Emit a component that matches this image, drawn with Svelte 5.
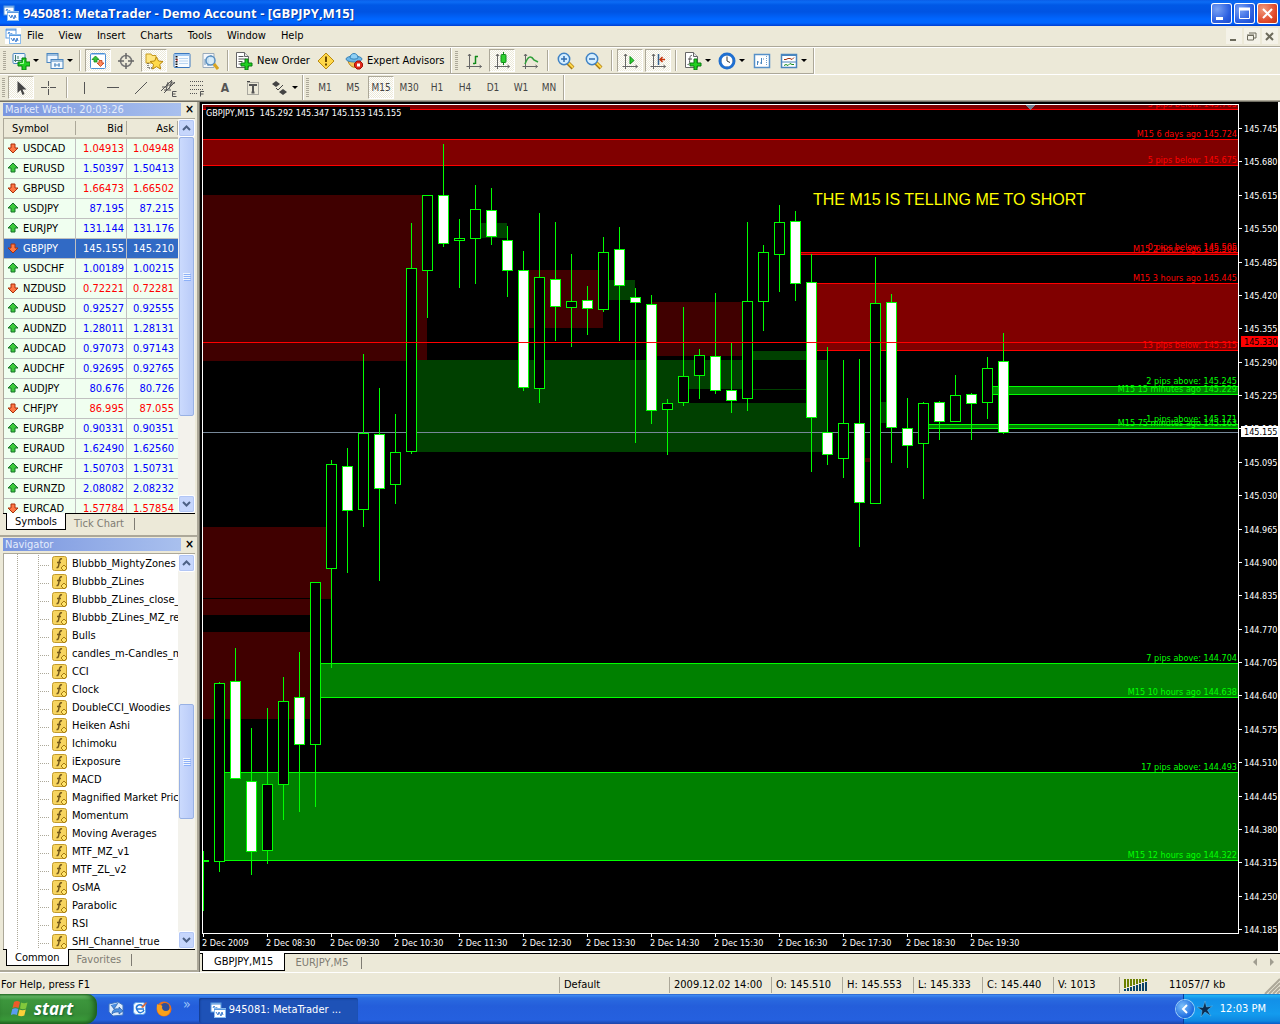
<script>
  const menus = ["File", "View", "Insert", "Charts", "Tools", "Window", "Help"];

  const quotes = [
    ["USDCAD", "1.04913", "1.04948", "down"],
    ["EURUSD", "1.50397", "1.50413", "up"],
    ["GBPUSD", "1.66473", "1.66502", "down"],
    ["USDJPY", "87.195", "87.215", "up"],
    ["EURJPY", "131.144", "131.176", "up"],
    ["GBPJPY", "145.155", "145.210", "down"],
    ["USDCHF", "1.00189", "1.00215", "up"],
    ["NZDUSD", "0.72221", "0.72281", "down"],
    ["AUDUSD", "0.92527", "0.92555", "up"],
    ["AUDNZD", "1.28011", "1.28131", "up"],
    ["AUDCAD", "0.97073", "0.97143", "up"],
    ["AUDCHF", "0.92695", "0.92765", "up"],
    ["AUDJPY", "80.676", "80.726", "up"],
    ["CHFJPY", "86.995", "87.055", "down"],
    ["EURGBP", "0.90331", "0.90351", "up"],
    ["EURAUD", "1.62490", "1.62560", "up"],
    ["EURCHF", "1.50703", "1.50731", "up"],
    ["EURNZD", "2.08082", "2.08232", "up"],
    ["EURCAD", "1.57784", "1.57854", "down"],
  ];
  let selected = "GBPJPY";

  const indicators = [
    "Blubbb_MightyZones", "Blubbb_ZLines", "Blubbb_ZLines_close_", "Blubbb_ZLines_MZ_re", "Bulls",
    "candles_m-Candles_m", "CCI", "Clock", "DoubleCCI_Woodies", "Heiken Ashi", "Ichimoku", "iExposure",
    "MACD", "Magnified Market Price", "Momentum", "Moving Averages", "MTF_MZ_v1", "MTF_ZL_v2", "OsMA",
    "Parabolic", "RSI", "SHI_Channel_true",
  ];

  const drawTools = ["vline", "hline", "trend", "channel", "fibo", "letter", "label"];
  const periods = ["M1", "M5", "M15", "M30", "H1", "H4", "D1", "W1", "MN"];
  let period = "M15";

  // plot scale: pixels below the top edge of the plot
  const step = 16;

  // high, body top, body bottom, low, 1 = bearish (filled)
  const candles = [
    [746, 755, 757, 806, 0], [577, 578, 757, 767, 0], [543, 576, 674, 674, 1], [623, 676, 747, 770, 1],
    [603, 679, 746, 759, 0], [572, 596, 680, 715, 0], [547, 592, 640, 707, 1], [477, 477, 640, 702, 0],
    [355, 359, 464, 563, 0], [343, 361, 406, 468, 1], [249, 328, 405, 422, 0], [283, 329, 384, 476, 1],
    [309, 347, 380, 399, 0], [118, 163, 347, 349, 0], [90, 90, 166, 213, 0], [39, 90, 139, 142, 1],
    [114, 133, 136, 183, 0], [80, 104, 134, 179, 0], [83, 105, 132, 140, 1], [121, 135, 166, 192, 1],
    [146, 165, 283, 286, 1], [108, 172, 284, 298, 0], [117, 174, 202, 236, 1], [149, 196, 203, 242, 0],
    [181, 195, 204, 230, 1], [132, 147, 205, 207, 0], [122, 144, 181, 236, 1], [183, 192, 198, 338, 1],
    [190, 199, 306, 319, 1], [294, 298, 305, 350, 0], [202, 271, 298, 301, 0], [244, 250, 271, 294, 0],
    [188, 251, 286, 289, 1], [238, 285, 296, 308, 1], [117, 196, 294, 306, 0], [140, 147, 197, 226, 0],
    [100, 117, 150, 187, 0], [106, 116, 179, 196, 1], [149, 177, 313, 367, 1], [242, 327, 350, 360, 1],
    [255, 318, 354, 373, 0], [254, 318, 398, 442, 1], [152, 198, 399, 399, 0], [189, 197, 323, 358, 1],
    [293, 323, 341, 363, 1], [297, 298, 339, 394, 0], [296, 297, 317, 335, 1], [270, 290, 317, 317, 0],
    [288, 289, 299, 335, 1], [252, 263, 298, 314, 0], [228, 256, 328, 329, 1],
  ];

  // tested zones: x, y, width, height, colour
  const oldZones = [
    [0, 90, 224, 166, "red"], [208, 255, 272, 29, "green"], [208, 284, 272, 14, "green"],
    [208, 298, 416, 49, "green"], [480, 255, 64, 29, "green"], [544, 246, 64, 9, "green"],
    [544, 284, 64, 1, "green"], [608, 255, 16, 43, "green"], [272, 118, 32, 15, "green"],
    [320, 165, 80, 58, "red"], [400, 175, 32, 20, "green"], [448, 197, 96, 54, "red"],
    [0, 422, 128, 72, "red"], [0, 494, 112, 16, "red"], [0, 527, 112, 87, "red"],
    [656, 353, 16, 4, "red"], [672, 297, 16, 21, "green"],
  ];

  // live zones: start x, upper edge, lower edge, colour, captions of the two edges
  const zones = [
    [0, -2, 4, "red", "", "5 pips below: 145.705"],
    [0, 34, 60, "red", "M15 6 days ago 145.724", "5 pips below: 145.675"],
    [592, 147, 149, "red", "0 pips below: 145.505", "M15 2 hours ago 145.506"],
    [608, 178, 245, "red", "M15 3 hours ago 145.445", "13 pips below: 145.315"],
    [784, 281, 289, "green", "2 pips above: 145.245", "M15 15 minutes ago 145.229"],
    [720, 319, 323, "green", "1 pips above: 145.171", "M15 75 minutes ago 145.163"],
    [112, 558, 592, "green", "7 pips above: 144.704", "M15 10 hours ago 144.638"],
    [16, 667, 755, "green", "17 pips above: 144.493", "M15 12 hours ago 144.322"],
  ];

  const prices = Array.from({ length: 25 }, (_, i) => ({
    text: (145.745 - i * 0.065).toFixed(3),
    y: Math.round(24 + i * 33.375),
  }));
  const times = ["2 Dec 2009"];
  for (let h = 8; h < 20; h++) times.push(`2 Dec ${String(h).padStart(2, "0")}:30`);

  const statusCells = [
    ["Default", "profile"], ["2009.12.02 14:00", "stamp"], ["O: 145.510", "price"], ["H: 145.553", "price"],
    ["L: 145.333", "low"], ["C: 145.440", "price"], ["V: 1013", "volume"],
  ];
</script>

{#snippet appIcon()}
  <svg class="app-icon" width="16" height="16" viewBox="0 0 16 16" aria-hidden="true">
    <rect x="1" y="1" width="10" height="9" fill="#fff" stroke="#5b9be0" />
    <path d="M1 2h10M3 6l1-2 2 3 1-2" fill="none" stroke="#3f86d8" />
    <rect x="4.500" y="6.500" width="11" height="9" fill="#fff" stroke="#8bbdf0" />
    <path d="M4 7.500h12" stroke="#5b9be0" />
    <path d="M6 10l2 3 1-3 2 4 1-4 1 3" fill="none" stroke="#3f7fd0" />
  </svg>
{/snippet}

{#snippet icon(name)}
  <svg width="18" height="18" viewBox="0 0 18 18" aria-hidden="true">
    {#if name === "new-chart"}
      <rect x="1" y="1.500" width="12" height="10" rx="1" fill="#eef6ff" stroke="#4a86bf" />
      <path d="M3.500 3v7M2 8.500h9M6 4v3" stroke="#3f7a68" fill="none" />
      <path d="M10 6h4v4h4v4h-4v4h-4v-4H6v-4h4z" fill="#20cf20" stroke="#087a10" />
      <path d="M11.500 8v3.500H8" stroke="#a6ffa0" fill="none" />
    {:else if name === "profiles"}
      <rect x="1" y="1.500" width="11" height="9" fill="#eef6ff" stroke="#4a86bf" />
      <path d="M1 3h11" stroke="#4a86bf" />
      <rect x="5" y="7.500" width="12" height="9" fill="#f4faff" stroke="#4a86bf" />
      <path d="M5 9h12M8 13h6M9 11v4M13 11v4" stroke="#4a86bf" fill="none" />
    {:else if name === "market"}
      <rect x="1.500" y="1.500" width="15" height="15" rx="1" fill="#fff" stroke="#4a8fd4" />
      <path d="M2 2.500h14" stroke="#a9cdf2" />
      <path d="M6.500 4L10 7.500H8V10H5V7.500H3z" fill="#35c435" stroke="#118a1a" stroke-width=".8" />
      <path d="M11.500 14.500L8 11h2V8.500h3V11h2z" fill="#ff8a5c" stroke="#c23a10" stroke-width=".8" />
    {:else if name === "target"}
      <circle cx="9" cy="9" r="5.500" fill="none" stroke="#777" stroke-width="1.500" />
      <path d="M9 1v6M9 11v6M1 9h6M11 9h6" stroke="#666" stroke-width="1.500" />
    {:else if name === "navigator"}
      <path d="M1 2h5l1 1.500h4V11H1z" fill="#ffe680" stroke="#c59a20" />
      <path d="M3 11v5h4" fill="none" stroke="#222" stroke-dasharray="1 1" />
      <path d="M11.500 5l2 4 4.500.5-3.300 3 1 4.500-4.200-2.300-4 2.300 1-4.500-3.300-3 4.400-.5z" fill="#ffd94a" stroke="#b8860b" />
    {:else if name === "data"}
      <rect x="1" y="1.500" width="16" height="14" rx="1" fill="#f6fbff" stroke="#3a78c0" />
      <path d="M2 3h14" stroke="#9cc6f2" stroke-width="2" />
      <path d="M3.500 4v11" stroke="#111" stroke-width="2" stroke-dasharray="1.500 1" />
      <path d="M6 6.500h9M6 9h9M6 11.500h9" stroke="#b9d5f1" />
      <path d="M3 8h2" stroke="#e02020" />
    {:else if name === "tester"}
      <path d="M2 1.500h11v14H2z" fill="#f4f7fa" stroke="#9ab" />
      <path d="M4 13V7M7 14V5M10 6V3" stroke="#6d93b4" />
      <circle cx="9.500" cy="8.500" r="4.500" fill="#cfe8fa" fill-opacity=".8" stroke="#5a8fc0" stroke-width="1.500" />
      <path d="M13 12l4 5" stroke="#d9a420" stroke-width="3" />
    {:else if name === "order" || name === "indicators"}
      <path d="M1.500.500h8l4 4v11h-12z" fill="#fff" stroke="#666" />
      <path d="M9.500.500v4h4" fill="#e6e6e6" stroke="#666" />
      {#if name === "order"}
        <path d="M3.500 4.500h5M3.500 7h7M3.500 9.500h4M3.500 12h3" stroke="#555" />
      {:else}
        <path d="M8 3.500c-2-.5-2 1-2.500 7-.2 2-1 2.500-2 2M4 7h4" fill="none" stroke="#555" />
      {/if}
      <path d="M10 7h3v4h4v3h-4v4h-3v-4H6v-3h4z" fill="#1fd01f" stroke="#087a10" />
    {:else if name === "warning"}
      <path d="M9 1l8 8-8 8-8-8z" fill="#ffd84a" stroke="#b98a10" />
      <path d="M9 4.500v5.500M9 11.500v2" stroke="#6a4a00" stroke-width="2" />
    {:else if name === "expert"}
      <path d="M3 9c2 7 9 9 12 2l-1-3z" fill="#f4c85a" stroke="#b58420" />
      <ellipse cx="9" cy="7" rx="8" ry="3" fill="#6db8e8" stroke="#3a84b8" />
      <path d="M5 6c0-6 8-6 8 0-2 1.500-6 1.500-8 0z" fill="#8ed0f5" stroke="#3a84b8" />
      <path d="M12 9h3l2.500 2.500v3L15 17h-3l-2.500-2.500v-3z" fill="#e02818" stroke="#a01008" />
      <rect x="12" y="11.500" width="3" height="3" fill="#fff" />
    {:else if name === "bars" || name === "candle" || name === "line" || name === "scroll" || name === "shift"}
      <path d="M4.500 2v15M1.500 14.500h15M3 4l1.500-2L6 4M14.500 13l2 1.500-2 1.500" fill="none" stroke="#666" />
      {#if name === "bars"}
        <path d="M10.500 4v8M10 4.500h3M8 11.500h2" stroke="#118a1a" stroke-width="1.500" fill="none" />
      {:else if name === "candle"}
        <path d="M10.500 0v13" stroke="#118a1a" />
        <rect x="8" y="2.500" width="5" height="8" rx="1" fill="#2fd02f" stroke="#118a1a" />
      {:else if name === "line"}
        <path d="M4 12c3-8 6-9 9-4l4 2" fill="none" stroke="#2fa03a" stroke-width="1.500" />
      {:else if name === "scroll"}
        <path d="M9 4.500l4 4-4 3.500z" fill="#2fd02f" stroke="#118a1a" />
      {:else}
        <path d="M9.500 2v11" stroke="#36618c" stroke-width="1.500" />
        <path d="M16 7.500h-5M13.500 5L11 7.500l2.500 2.500" stroke="#c8340c" stroke-width="1.500" fill="none" />
      {/if}
    {:else if name === "zoom-in" || name === "zoom-out"}
      <path d="M11 11l5 5" stroke="#a87a10" stroke-width="4" />
      <path d="M11.500 11l4.500 4.500" stroke="#ffd84a" stroke-width="2" />
      <circle cx="7" cy="7" r="5.700" fill="#d5eeff" stroke="#3f82c4" stroke-width="1.500" />
      <path d={name === "zoom-in" ? "M4 7h6M7 4v6" : "M4 7h6"} stroke="#2f6cb0" stroke-width="1.500" />
    {:else if name === "clock"}
      <circle cx="9" cy="9" r="7" fill="#fff" stroke="#1f6fd0" stroke-width="3" />
      <path d="M9 4.500V9l3 1.500" fill="none" stroke="#333" />
      <path d="M9 3v1M9 14v1M3 9h1M14 9h1" stroke="#888" />
    {:else if name === "template"}
      <rect x="1.500" y="2.500" width="15" height="13" fill="#fff" stroke="#5590c8" stroke-width="1.500" />
      <path d="M4.500 9v4M4 10h2M8.500 6v6M7 11h2M10 7h1" stroke="#4a86bf" />
      <path d="M13.500 4v10" stroke="#6a9ccc" stroke-dasharray="1 1" />
    {:else if name === "panes"}
      <rect x="1.500" y="2.500" width="15" height="13" fill="#fff" stroke="#4a86bf" stroke-width="1.500" />
      <path d="M1 3.500h16M2 10h14" stroke="#4a86bf" />
      <path d="M4 7.500h2l2-1h2l2 1 2-2" stroke="#a03010" fill="none" />
      <path d="M4 13.500l2-1 2 1 2-2 2 1h2" stroke="#118a1a" fill="none" />
    {:else if name === "cursor"}
      <path d="M5.500 2v12l3-3 2 5 2-1-2-4.500h4z" fill="#444" />
    {:else if name === "cross"}
      <path d="M8.500 2v5M8.500 10v6M1 8.500h6M10 8.500h6M8 8.500h1" stroke="#555" />
    {:else if name === "vline"}
      <path d="M8.500 3v12" stroke="#555" />
    {:else if name === "hline"}
      <path d="M3 8.500h12" stroke="#555" />
    {:else if name === "trend"}
      <path d="M3 15L15 3" stroke="#555" />
    {:else if name === "channel"}
      <path d="M1 12L12 1M4 14L15 3M2 8h5M4 11h7M6 6h6M10 4h5M6 12L8 3M9 10l3-8" stroke="#555" fill="none" />
      <path d="M16.500 12.500h-4v5h4M12.500 15h3" stroke="#555" fill="none" />
    {:else if name === "fibo"}
      <path d="M2 2.500h14M2 6.500h14M2 10.500h14M2 14.500h8" stroke="#555" stroke-dasharray="1 1" />
      <path d="M16 12.500h-3.500v5M12.500 15h3" stroke="#555" fill="none" />
    {:else if name === "label"}
      <rect x="3.500" y="3.500" width="11" height="12" fill="none" stroke="#666" stroke-dasharray="1 1" />
      <path d="M5 6h8M9 6v8M7.500 13.500h3" stroke="#555" stroke-width="2" />
      <path d="M3 2.500h3" stroke="#444" />
    {:else if name === "arrows"}
      <path d="M5 2l4 3-4 3-4-3zM12 10l4 3-4 3-4-3z" fill="#444" />
      <path d="M5 9l2 2 5-5" stroke="#444" fill="none" />
    {/if}
  </svg>
{/snippet}

{#snippet tool(name, label, on = false, drop = false)}
  <button class="tool" class:on class:drop aria-label={label}>
    {@render icon(name)}
    {#if drop}<span class="caret"></span>{/if}
  </button>
{/snippet}

{#snippet scrollbar(size, offset)}
  <div class="scrollbar">
    <button aria-label="Scroll up"><svg width="9" height="6" viewBox="0 0 9 6"><path d="M1 5l3.500-3.500L8 5" /></svg></button>
    <div class="track">
      <div class="thumb" style="height: {size}%; margin-top: {offset}px"><i></i><i></i><i></i><i></i></div>
    </div>
    <button aria-label="Scroll down"><svg width="9" height="6" viewBox="0 0 9 6"><path d="M1 1l3.500 3.500L8 1" /></svg></button>
  </div>
{/snippet}

<div class="desktop">
  <header class="titlebar">
    {@render appIcon()}
    <h1>945081: MetaTrader - Demo Account - [GBPJPY,M15]</h1>
    <button class="win" aria-label="Minimize"><svg width="21" height="21" viewBox="0 0 21 21"><path d="M5 15.500h7" stroke-width="3" /></svg></button>
    <button class="win" aria-label="Maximize"><svg width="21" height="21" viewBox="0 0 21 21"><path d="M5 6h11" stroke-width="3" /><path d="M5.500 5v10.500h10V5" /></svg></button>
    <button class="win close" aria-label="Close"><svg width="21" height="21" viewBox="0 0 21 21"><path d="M6 6l9 9M15 6l-9 9" stroke-width="2" /></svg></button>
  </header>

  <nav class="menubar">
    <span class="child-icon">{@render appIcon()}</span>
    {#each menus as menu}
      <button class="menu">{menu}</button>
    {/each}
    <span class="spacer"></span>
    <button class="mdi" aria-label="Minimize chart"><svg width="15" height="15" viewBox="0 0 15 15"><path d="M4 11h6" stroke-width="2" /></svg></button>
    <button class="mdi" aria-label="Restore chart"><svg width="15" height="15" viewBox="0 0 15 15"><path d="M5 4h7v5h-2M3.500 7v4h6V6.500h-6M3 6h7" /></svg></button>
    <button class="mdi" aria-label="Close chart"><svg width="15" height="15" viewBox="0 0 15 15"><path d="M4 4l7 7M11 4l-7 7" stroke-width="2" /></svg></button>
  </nav>

  <div class="toolrow">
    <div class="toolbar">
      <span class="grip"></span>
      {@render tool("new-chart", "New chart", false, true)}
      {@render tool("profiles", "Profiles", false, true)}
      <span class="sep"></span>
      {@render tool("market", "Market Watch", true)}
      {@render tool("target", "Data Window")}
      {@render tool("navigator", "Navigator", true)}
      {@render tool("data", "Terminal")}
      {@render tool("tester", "Strategy Tester")}
      <span class="sep"></span>
      <button class="tool wide order">{@render icon("order")}New Order</button>
      {@render tool("warning", "MetaEditor")}
      <button class="tool wide expert">{@render icon("expert")}Expert Advisors</button>
    </div>
    <div class="toolbar">
      <span class="grip"></span>
      {@render tool("bars", "Bar chart")}
      {@render tool("candle", "Candlesticks", true)}
      {@render tool("line", "Line chart")}
      <span class="sep"></span>
      {@render tool("zoom-in", "Zoom in")}
      {@render tool("zoom-out", "Zoom out")}
      <span class="sep"></span>
      {@render tool("scroll", "Auto scroll", true)}
      {@render tool("shift", "Chart shift", true)}
      <span class="sep"></span>
      {@render tool("indicators", "Indicators", false, true)}
      {@render tool("clock", "Periods", false, true)}
      {@render tool("template", "Templates")}
      {@render tool("panes", "Windows", false, true)}
    </div>
  </div>

  <div class="toolrow second">
    <div class="toolbar">
      <span class="grip"></span>
      {@render tool("cursor", "Cursor", true)}
      {@render tool("cross", "Crosshair")}
      <span class="sep"></span>
      {#each drawTools as name}
        {#if name === "letter"}
          <button class="tool letter">A</button>
        {:else}
          {@render tool(name, name)}
        {/if}
      {/each}
      {@render tool("arrows", "Arrows", false, true)}
    </div>
    <div class="toolbar">
      <span class="grip"></span>
      {#each periods as p}
        <button class="tool period" class:on={p === period} on:click={() => (period = p)}>{p}</button>
      {/each}
    </div>
  </div>

  <main>
    <aside>
      <section class="panel watch">
        <header><h2>Market Watch: 20:03:26</h2><button aria-label="Close Market Watch">×</button></header>
        <div class="body">
          <div class="clip">
            <table>
              <thead><tr><th>Symbol</th><th class="num">Bid</th><th class="num">Ask</th></tr></thead>
              <tbody>
                {#each quotes as [symbol, bid, ask, dir]}
                  <tr class={dir} class:selected={symbol === selected} on:click={() => (selected = symbol)}>
                    <td>
                      <svg width="12" height="12" viewBox="0 0 12 12" aria-hidden="true">
                        {#if dir === "up"}
                          <path d="M6 1l5 5H8v4H4V6H1z" fill="#3cc83c" stroke="#15722a" />
                        {:else}
                          <path d="M6 11L1 6h3V2h4v4h3z" fill="#ff7a45" stroke="#a8300c" />
                        {/if}
                      </svg>{symbol}
                    </td>
                    <td class="num">{bid}</td>
                    <td class="num">{ask}</td>
                  </tr>
                {/each}
              </tbody>
            </table>
          </div>
          {@render scrollbar(78, 0)}
        </div>
        <footer><button class="active">Symbols</button><button>Tick Chart</button></footer>
      </section>

      <section class="panel navigator">
        <header><h2>Navigator</h2><button aria-label="Close Navigator">×</button></header>
        <div class="body">
          <ul class="clip">
            {#each indicators as name}
              <li>
                <span class="branch"></span>
                <svg width="16" height="16" viewBox="0 0 16 16" aria-hidden="true">
                  <rect x=".5" y=".5" width="14" height="14" rx="2" fill="#f7d560" stroke="#c29a2c" />
                  <path d="M10 3c-2-.6-2.500.5-3 4.500-.3 3-1 4.500-2.500 4M5 6.500h4" fill="none" stroke="#73581a" stroke-width="1.500" />
                  <path d="M12 9l3 3-3 3-3-3z" fill="#ffe36a" stroke="#a67c14" />
                </svg>
                {name}
              </li>
            {/each}
          </ul>
          {@render scrollbar(32, 132)}
        </div>
        <footer><button class="active">Common</button><button>Favorites</button></footer>
      </section>
    </aside>

    <section class="workspace">
      <div class="chart">
        <svg class="plot" shape-rendering="crispEdges">
          {#each oldZones as [x, y, w, h, tone]}
            <rect {x} {y} width={w} height={h} class="old-{tone}" />
          {/each}
          <rect x="0" y="493" width="112" height="1" />
          <path d="M0 327.500h4000" class="bid" />
          {#each zones as [x, top, bottom, tone]}
            <svg {x} width="100%" class="zone {tone}">
              <rect y={top} width="100%" height={bottom - top} />
              <path d="M0 {top + 0.5}h4000M0 {bottom + 0.5}h4000" />
            </svg>
          {/each}
          {#each candles as [high, top, bottom, low, filled], i}
            <g class="candle" class:filled>
              <rect class="wick" x={i * step} y={high} width="1" height={low - high} />
              <rect class="bull" x={i * step - 5} y={top} width="11" height={bottom - top} />
              {#if bottom - top > 2}
                <rect class="fill" x={i * step - 4} y={top + 1} width="9" height={bottom - top - 2} />
              {/if}
            </g>
          {/each}
          <path d="M0 237.500h4000" class="alert" />
          <svg x="100%" width="1" height="100%" class="captions">
            {#each zones as [x, top, bottom, tone, upper, lower]}
              <text x="-1" y={top - 2} class={tone}>{upper}</text>
              <text x="-1" y={bottom - 2} class={tone}>{lower}</text>
            {/each}
            <path d="M-213 0h10l-5 5z" fill="#708090" />
          </svg>
          <rect x="3" y="2" width="204" height="11" />
          <text x="3" y="11" class="head" xml:space="preserve">GBPJPY,M15  145.292 145.347 145.153 145.155</text>
          <text x="610" y="100" class="note">THE M15 IS TELLING ME TO SHORT</text>
        </svg>
        <svg class="prices" shape-rendering="crispEdges">
          {#each prices as { text, y }}
            <rect y={y} width="3" height="1" />
            <text x="5" y={y + 4}>{text}</text>
          {/each}
          <rect x="2" y="232" width="37" height="11" class="ask" />
          <text x="5" y="241" class="dark">145.330</text>
          <rect x="2" y="322" width="37" height="11" />
          <text x="5" y="331" class="dark">145.155</text>
        </svg>
        <ol class="times">
          {#each times as time}
            <li>{time}</li>
          {/each}
        </ol>
      </div>
      <div class="chart-tabs">
        <button class="active">GBPJPY,M15</button><button>EURJPY,M5</button>
        <span class="spacer"></span>
        <button class="arrow" aria-label="Previous chart"><svg width="4" height="8" viewBox="0 0 4 8"><path d="M4 0v8L0 4z" /></svg></button>
        <button class="arrow" aria-label="Next chart"><svg width="4" height="8" viewBox="0 0 4 8"><path d="M0 0v8l4-4z" /></svg></button>
      </div>
    </section>
  </main>

  <footer class="status">
    <span class="help">For Help, press F1</span>
    {#each statusCells as [text, kind]}
      <span class="cell {kind}">{text}</span>
    {/each}
    <span class="cell traffic">
      <svg width="24" height="12" viewBox="0 0 24 12" shape-rendering="crispEdges" aria-hidden="true">
        {#each [10, 9, 8, 7, 6, 5, 4, 3] as h, i}
          <rect x={i * 3} y="0" width="2" height={h - 1} fill="#6b8000" />
          <rect x={i * 3} y={h} width="2" height={12 - h} fill="#0a4468" />
        {/each}
      </svg>
      11057/7 kb
    </span>
    <svg class="resize" width="16" height="16" viewBox="0 0 16 16" aria-hidden="true">
      <path d="M1 16L16 1M5 16L16 5M9 16l7-7M13 16l3-3" stroke="#aca899" stroke-width="2" />
    </svg>
  </footer>

  <div class="taskbar">
    <button class="start">
      <svg width="19" height="18" viewBox="0 0 19 18" aria-hidden="true">
        <path d="M3 2c3-1.500 4-1 6 0L7.500 8c-2-1-4-1-6 0z" fill="#ee5a2a" />
        <path d="M10 2.500c2 1 4 1 6.500 0L15 8.500c-2 1-4 1-6 0z" fill="#82c83c" />
        <path d="M1.300 9c2-1 4-1 6 0l-1.500 6c-2-1-4-1-6 0z" fill="#5a9cf0" />
        <path d="M8.500 9.500c2 1 4 1 6.300 0l-1.500 6c-2 1-4 1-6.300 0z" fill="#fbd03a" />
      </svg>
      start
    </button>
    <div class="quick">
      <button aria-label="Mail">
        <svg width="16" height="16" viewBox="0 0 16 16"><path d="M1 3l9-2 5 3v10l-10 1-4-4z" fill="#dceafc" stroke="#3f74c0" /><path d="M3 4l3 4 4-6M4 13c0-4 3-6 7-5V6l4 4-4 3v-2c-3 0-5 0-7 2z" fill="#4a8de0" stroke="#174f9c" stroke-width=".6" /></svg>
      </button>
      <button aria-label="Show desktop">
        <svg width="16" height="16" viewBox="0 0 16 16"><rect x="1.500" y="1.500" width="12" height="12" rx="3" fill="#f4faff" stroke="#5aa0e8" /><path d="M11 5c-4-3-8 0-6 4s6 3 7 0M5 8h7" fill="none" stroke="#2478d8" stroke-width="1.500" /><path d="M9 6l5-5 1 1-4 5z" fill="#d8683c" /></svg>
      </button>
      <button aria-label="Firefox">
        <svg width="16" height="16" viewBox="0 0 16 16"><circle cx="8" cy="8" r="7.500" fill="#e8701c" /><circle cx="9" cy="6.500" r="4.500" fill="#2d4f9c" /><path d="M1 3c1 1 2 1 3 1 2 0 3 1 2 2 0 2 1 4 4 4 2 0 4-1 4-3 1 5-3 8-6 8-5 0-8-5-7-12z" fill="#f9a11c" /></svg>
      </button>
      <span class="more">»</span>
    </div>
    <button class="task">{@render appIcon()}945081: MetaTrader ...</button>
    <span class="spacer"></span>
    <div class="tray">
      <button class="expand" aria-label="Show hidden icons"><svg width="8" height="10" viewBox="0 0 8 10"><path d="M6 1L2 5l4 4" /></svg></button>
      <svg width="16" height="16" viewBox="0 0 16 16" aria-hidden="true"><path d="M8 0l1.500 6 6-1-5 4 3.500 6-6-4-4 5 1-6.500L0 6l6 .5z" fill="#0b2c50" stroke="#6fc4f2" stroke-width=".5" /></svg>
      <time>12:03 PM</time>
    </div>
  </div>
</div>

<style>
  :global(body) {
    margin: 0;
    background: #ece9d8;
  }
  .desktop {
    display: flex;
    flex-direction: column;
    height: 100vh;
    overflow: hidden;
    background: #ece9d8;
    color: #000;
    font: 11px/14px "DejaVu Sans Condensed", Tahoma, sans-serif;
    white-space: nowrap;
  }
  button {
    padding: 0;
    border: 0;
    background: none;
    color: inherit;
    font: inherit;
  }
  h1, h2, ul, ol {
    margin: 0;
    padding: 0;
    list-style: none;
  }
  svg {
    display: block;
    flex: none;
  }
  .spacer {
    flex: 1;
  }

  .titlebar {
    display: flex;
    align-items: center;
    gap: 2px;
    height: 26px;
    padding: 0 2px 0 3px;
    box-sizing: border-box;
    background: linear-gradient(#0a5ee8 0, #0c6cf5 2px, #0058e6 5px, #0054e3 12px, #0066ff 19px, #0066ff 23px, #003dd0 26px);
    color: #fff;
  }
  h1 {
    flex: 1;
    margin-left: 2px;
    font: bold 13px/16px "Open Sans", sans-serif;
    text-shadow: 1px 1px #0a3aa0;
  }
  .win {
    width: 21px;
    height: 21px;
    box-sizing: border-box;
    border-radius: 3px;
    box-shadow: inset 0 0 0 1px #fff;
    background: radial-gradient(circle at 30% 30%, #7aa2f4, #2a5ee0 60%, #1a48c8);
  }
  .win.close {
    background: radial-gradient(circle at 30% 30%, #f09a7c, #e0492a 60%, #b8300f);
  }
  .win path {
    fill: none;
    stroke: #fff;
  }

  .menubar {
    display: flex;
    align-items: center;
    height: 20px;
    border-bottom: 1px solid #aca899;
    box-shadow: 0 1px #fff;
    font-size: 11px;
  }
  .child-icon {
    margin: 0 1px 0 5px;
    background: #fff;
  }
  .menu {
    margin-left: 5px;
    padding: 0 5px;
  }
  .child-icon + .menu {
    margin-left: 0;
  }
  .mdi {
    width: 16px;
    height: 16px;
    margin-right: 2px;
    background: #f4f2e8;
  }
  .mdi path {
    fill: none;
    stroke: #6c6a5c;
  }

  .toolrow {
    display: flex;
    height: 26px;
    padding-top: 1px;
    border-bottom: 1px solid #fff;
  }
  .toolbar {
    display: flex;
    align-items: center;
    gap: 2px;
    padding: 0 3px;
    border-right: 1px solid #aca899;
    border-bottom: 1px solid #aca899;
    box-shadow: 1px 0 #fff;
  }
  .toolbar + .toolbar {
    padding: 0 4px;
  }
  .toolrow.second {
    height: 25px;
    padding: 0;
    border-bottom: 1px solid #aca899;
  }
  .second .toolbar {
    padding: 0 2px;
    border-bottom: 0;
  }
  .second .toolbar + .toolbar {
    padding: 0 1px 0 3px;
  }
  .grip {
    width: 3px;
    height: 20px;
    margin-right: 1px;
    background: repeating-linear-gradient(#aca899 0 1px, #ece9d8 1px 2px);
  }
  .sep {
    width: 1px;
    height: 21px;
    margin: 0 2px;
    border-right: 1px solid #fff;
    background: #aca899;
  }
  .tool {
    display: flex;
    align-items: center;
    justify-content: center;
    width: 26px;
    height: 23px;
    box-sizing: border-box;
  }
  .tool.drop {
    width: 32px;
    gap: 3px;
  }
  .tool.wide {
    justify-content: flex-start;
    gap: 4px;
    padding-left: 2px;
  }
  .tool.order {
    width: 78px;
  }
  .tool.expert {
    width: 106px;
    padding-left: 4px;
  }
  .tool.on {
    border: 1px solid;
    border-color: #aca899 #fff #fff #aca899;
    background: repeating-conic-gradient(#fff 0 25%, #ece9d8 0 50%) 0 0 / 2px 2px;
  }
  .caret {
    border: 3px solid transparent;
    border-top-color: #000;
    border-bottom: 0;
  }
  .period {
    color: #444;
    font-size: 10px;
  }
  .letter {
    color: #555;
    font-weight: bold;
    font-size: 12px;
  }

  main {
    display: flex;
    flex: 1;
    min-height: 0;
    border-top: 1px solid #716f64;
  }
  aside {
    display: flex;
    flex-direction: column;
    width: 197px;
    border-right: 2px solid #aca899;
  }
  .panel {
    display: flex;
    flex-direction: column;
    padding: 1px 2px 0 3px;
    border-bottom: 2px solid #aca899;
  }
  .watch {
    height: 432px;
  }
  .navigator {
    flex: 1;
    min-height: 0;
  }
  .panel header {
    display: flex;
    align-items: center;
    height: 13px;
    margin-bottom: 2px;
  }
  h2 {
    width: 176px;
    padding-left: 2px;
    background: linear-gradient(90deg, #7a96df, #a9c0ee);
    color: #e4ecfc;
    font: inherit;
    line-height: 13px;
  }
  .panel header button {
    margin-left: 4px;
    font-weight: bold;
    font-size: 12px;
    line-height: 13px;
  }
  .body {
    display: flex;
    flex: 1;
    min-height: 0;
    border: 1px solid #aca899;
    border-width: 1px 0 0 1px;
    background: #fff;
  }
  .clip {
    flex: 1;
    min-width: 0;
    overflow: hidden;
  }
  table {
    width: 100%;
    border-collapse: separate;
    border-spacing: 0;
    table-layout: fixed;
  }
  th {
    height: 17px;
    padding: 1px 4px 0 8px;
    border-bottom: 2px solid #c0bdad;
    background: linear-gradient(90deg, transparent calc(100% - 1px), #aca899 0) 0 2px / 100% 14px no-repeat #ece9d8;
    font-weight: normal;
    text-align: left;
  }
  th:first-child {
    width: 60px;
  }
  td {
    height: 19px;
    padding: 0 2px 0 3px;
    border-right: 1px solid #c0c0c0;
    border-bottom: 1px solid #c0c0c0;
    background: #f0fff0;
  }
  td:last-child {
    padding-right: 4px;
    border-right: 0;
  }
  td svg {
    display: inline-block;
    margin-right: 4px;
    vertical-align: -2px;
  }
  .num {
    text-align: right;
  }
  .up .num {
    color: #00f;
  }
  .down .num {
    color: #f00;
  }
  .selected td,
  .selected .num {
    background: #316ac5;
    color: #fff;
  }
  .panel footer {
    display: flex;
    height: 20px;
    border-top: 1px solid #000;
    align-items: flex-start;
  }
  .watch footer {
    height: 21px;
  }
  .panel footer button {
    height: 17px;
    padding: 0 8px;
    border-right: 1px solid #7f7c73;
    color: #7f7c73;
    line-height: 18px;
  }
  .panel footer button + button {
    height: 12px;
    margin-top: 4px;
    padding-right: 10px;
    line-height: 12px;
  }
  .panel footer .active {
    margin: -1px 0 0 3px;
    border: 1px solid #000;
    border-top: 0;
    background: #fff;
    color: #000;
  }

  .scrollbar {
    display: flex;
    flex-direction: column;
    width: 17px;
    background: #f3f2ec;
  }
  .scrollbar button {
    display: grid;
    place-items: center;
    height: 16px;
    margin: 1px;
    border-radius: 2px;
    background: #c6d6fc;
    box-shadow: 0 0 0 1px #fff, inset 0 0 0 1px #b2c6f5;
  }
  .scrollbar path {
    fill: none;
    stroke: #4d6185;
    stroke-width: 2;
  }
  .track {
    flex: 1;
    min-height: 0;
  }
  .thumb {
    display: flex;
    flex-direction: column;
    align-items: center;
    justify-content: center;
    gap: 1px;
    box-sizing: border-box;
    border: 1px solid #98b1e4;
    border-radius: 2px;
    margin: 0 1px;
    background: linear-gradient(90deg, #cbdafd, #b9cbf8);
  }
  .thumb i {
    width: 7px;
    height: 1px;
    background: #eef4fe;
    box-shadow: 1px 1px #8cb0f8;
  }

  .navigator ul {
    padding-top: 1px;
    background: repeating-linear-gradient(#aca899 0 1px, transparent 1px 2px) 13px 0 / 1px 100% no-repeat;
  }
  .navigator li {
    display: flex;
    align-items: center;
    height: 18px;
    padding-left: 34px;
  }
  .navigator li svg {
    margin: 0 4px 0 1px;
  }
  .branch {
    flex: none;
    width: 13px;
    height: 18px;
    background:
      repeating-linear-gradient(#aca899 0 1px, transparent 1px 2px) 0 0 / 1px 100% no-repeat,
      repeating-linear-gradient(90deg, #aca899 0 1px, transparent 1px 2px) 0 10px / 11px 1px no-repeat;
  }

  .workspace {
    display: flex;
    flex: 1;
    flex-direction: column;
    min-width: 0;
    border-left: 1px solid #716f64;
  }
  .chart {
    display: grid;
    flex: 1;
    grid-template: minmax(0, 1fr) 17px / minmax(0, 1fr) 39px;
    min-height: 0;
    padding: 2px 0 0 2px;
    border-right: 2px solid #fff;
    border-bottom: 2px solid #fff;
    background: #000;
    color: #fff;
    font-size: 9px;
  }
  .plot {
    width: 100%;
    height: 100%;
    box-sizing: border-box;
    border: 1px solid #fff;
    overflow: hidden;
  }
  .prices {
    width: 100%;
    height: 100%;
    fill: #fff;
    overflow: visible;
  }
  .prices .dark {
    fill: #000;
  }
  .prices .ask {
    fill: #f00;
  }
  .bid {
    stroke: #778899;
  }
  .alert {
    stroke: #f00;
  }
  .old-red {
    fill: #400000;
  }
  .old-green {
    fill: #004000;
  }
  .zone.red {
    fill: #800000;
    stroke: #f00;
  }
  .zone.green {
    fill: #008000;
    stroke: #0f0;
  }
  .zone rect {
    stroke: none;
  }
  .wick,
  .bull {
    fill: #0f0;
  }
  .fill {
    fill: #000;
  }
  .filled .fill {
    fill: #fff;
  }
  .captions {
    overflow: visible;
    text-anchor: end;
  }
  .captions .red {
    fill: #f00;
  }
  .captions .green {
    fill: #0f0;
  }
  .head {
    fill: #fff;
  }
  .note {
    fill: #ff0;
    font: 16px "Liberation Sans", Arial, sans-serif;
  }
  .times {
    display: flex;
    grid-column: 1 / -1;
    overflow: hidden;
  }
  .times li {
    flex: none;
    width: 64px;
    padding-top: 3px;
    line-height: 13px;
    background: linear-gradient(#fff, #fff) 1px 0 / 1px 3px no-repeat;
  }

  .chart-tabs {
    display: flex;
    height: 18px;
    padding-left: 2px;
    border-top: 1px solid #000;
  }
  .chart-tabs button {
    height: 16px;
    padding: 0 10px;
    color: #7f7c73;
    line-height: 16px;
  }
  .chart-tabs .active {
    height: 18px;
    padding: 0 11px;
    margin-top: -1px;
    border: 1px solid #000;
    border-top: 0;
    background: #fff;
    color: #000;
    line-height: 18px;
  }
  .chart-tabs .active + button {
    height: 12px;
    margin-top: 3px;
    padding-right: 13px;
    border-right: 1px solid #7f7c73;
    line-height: 12px;
  }
  .chart-tabs .arrow {
    padding: 0 6px 0 7px;
    fill: #a09d90;
  }

  .status {
    display: flex;
    align-items: center;
    height: 22px;
    box-sizing: border-box;
    padding-top: 3px;
    border-top: 1px solid #fff;
  }
  .help {
    flex: 1;
    padding-left: 1px;
  }
  .cell {
    padding-left: 4px;
    width: 66px;
    border-left: 1px solid #aca899;
    line-height: 16px;
  }
  .cell.profile {
    width: 105px;
  }
  .cell.stamp {
    width: 97px;
  }
  .cell.low {
    width: 64px;
  }
  .cell.volume {
    width: 61px;
  }
  .cell.traffic {
    display: flex;
    align-items: center;
    gap: 21px;
    width: 140px;
  }
  .resize {
    align-self: flex-end;
  }

  .taskbar {
    display: flex;
    align-items: center;
    height: 30px;
    background: linear-gradient(#1f4fb8 0, #3f8cf3 1px, #2a6be0 4px, #245edb 12px, #2560df 26px, #1c44a8 30px);
    color: #fff;
  }
  .start {
    display: flex;
    align-items: center;
    gap: 4px;
    width: 97px;
    height: 30px;
    padding-left: 11px;
    border-radius: 0 10px 12px 0;
    background: linear-gradient(#2f7d2f 0, #6cbf6c 2px, #3d963d 6px, #368c36 20px, #3a9a3a 26px, #226a22 30px);
    box-shadow: inset -3px 0 5px #1c5c1c;
    font: italic bold 17px/20px "Open Sans", sans-serif;
    text-shadow: 1px 1px 2px #163;
  }
  .quick {
    display: flex;
    align-items: center;
    gap: 8px;
    margin: 0 8px 0 11px;
  }
  .more {
    align-self: flex-start;
    margin: -4px 0 0 3px;
    color: #9cc4fa;
    font-size: 14px;
  }
  .task {
    display: flex;
    align-items: center;
    gap: 3px;
    width: 159px;
    height: 25px;
    margin-top: 2px;
    padding-left: 11px;
    border-radius: 2px;
    background: #1e52b7;
    box-shadow: inset 1px 1px 2px #123a8c;
  }
  .tray {
    display: flex;
    align-items: center;
    gap: 3px;
    height: 30px;
    padding-right: 14px;
    border-left: 1px solid #0a3c9c;
    background: linear-gradient(#0c59b9 0, #22b5f5 1px, #1290e8 5px, #139bee 20px, #0f88e0 27px, #095bc9 30px);
  }
  .tray time {
    margin-left: 4px;
  }
  .expand {
    display: grid;
    place-items: center;
    width: 18px;
    height: 18px;
    margin-left: -8px;
    border-radius: 9px;
    background: radial-gradient(circle at 35% 35%, #7cc0fa, #1c6ae0 70%);
    box-shadow: 0 0 0 1px #9cd0f8;
  }
  .expand path {
    fill: none;
    stroke: #fff;
    stroke-width: 2;
  }
</style>
